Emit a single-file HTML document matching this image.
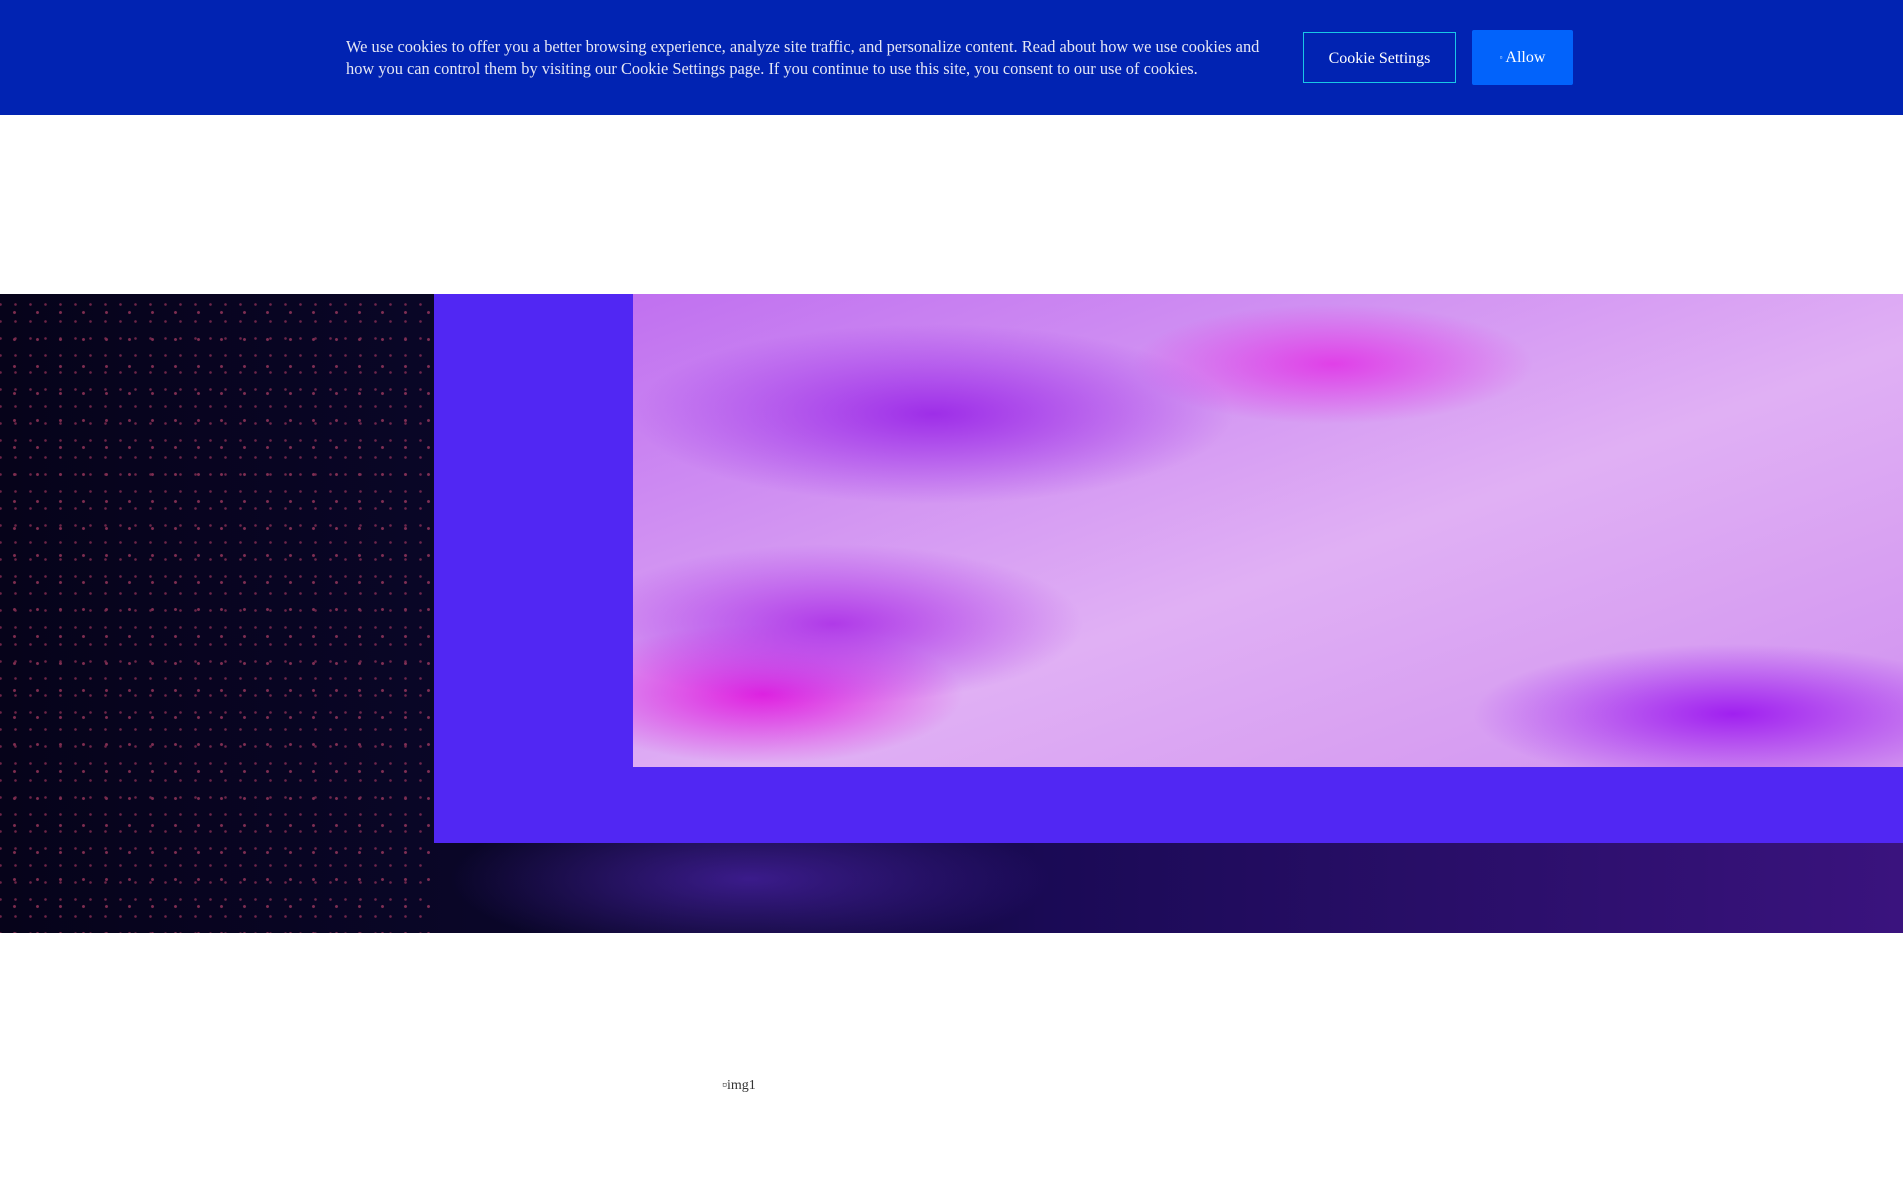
<!DOCTYPE html>
<html><head><meta charset="utf-8"><style>
html,body{margin:0;padding:0;width:1903px;height:1190px;overflow:hidden;background:#fff;font-family:"Liberation Serif",serif}
#banner{position:absolute;left:0;top:0;width:1903px;height:115px;background:#0123b2}
#txt{position:absolute;left:346px;top:36px;width:960px;color:#e4e6f4;font-size:16.4px;line-height:22px;white-space:nowrap}
#cs{position:absolute;left:1303px;top:32px;width:153px;height:51px;border:1px solid #19c6e6;color:#fff;font-size:16px;display:flex;align-items:center;justify-content:center;box-sizing:border-box;padding-top:2px}
#al{position:absolute;left:1472px;top:30px;width:101px;height:55px;background:#0263fb;border-radius:2px;color:#fff;font-size:16px;display:flex;align-items:center;justify-content:center}
#hero{position:absolute;left:0;top:294px;width:1903px;height:639px;background:
radial-gradient(ellipse 300px 80px at 750px 585px,rgba(90,40,200,.6),transparent),
linear-gradient(90deg,#06031a 0,#0c0830 40%,#1a0a55 55%,#3a137e 100%)}
.dots{position:absolute;left:0;top:0;width:434px;height:639px;background-image:radial-gradient(circle,#e0507a 1.2px,transparent 1.8px),radial-gradient(circle,#c0406a 1px,transparent 1.6px);background-size:23px 27px,15px 17px;background-position:3px 5px,8px 2px;opacity:.55}
#panel{position:absolute;left:434px;top:294px;width:1469px;height:549px;background:#5127f3}
#sky{position:absolute;left:633px;top:294px;width:1270px;height:473px;background:
radial-gradient(ellipse 300px 90px at 300px 120px,#9e2ee8,transparent),
radial-gradient(ellipse 250px 80px at 200px 330px,#b03ae8,transparent),
radial-gradient(ellipse 200px 70px at 130px 400px,#e020e0,transparent),
radial-gradient(ellipse 260px 70px at 1100px 420px,#a020f0,transparent),
radial-gradient(ellipse 200px 60px at 700px 70px,#e040e8,transparent),
linear-gradient(160deg,#c070f0,#e0b0f4 55%,#d090f0)}
#img1{position:absolute;left:722px;top:1078px;font-size:14px;color:#333}
</style></head><body>
<div id="banner">
<div id="txt">We use cookies to offer you a better browsing experience, analyze site traffic, and personalize content. Read about how we use cookies and<br>how you can control them by visiting our Cookie Settings page. If you continue to use this site, you consent to our use of cookies.</div>
<div id="cs">Cookie Settings</div>
<div id="al"><span style="font-size:8px;margin-right:3px">▫</span>Allow</div>
</div>
<div id="hero"><div class="dots"></div></div>
<div id="panel"></div>
<div id="sky"></div>
<div id="img1">▫img1</div>
</body></html>
